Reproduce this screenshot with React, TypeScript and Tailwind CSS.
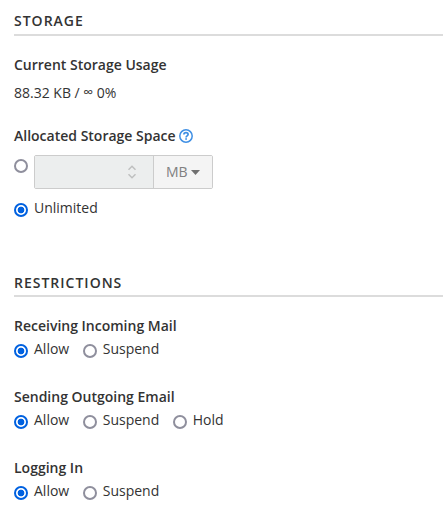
import { useState } from "react";

interface RadioProps {
  name: string;
  value: string;
  checked: boolean;
  onChange: () => void;
}

function Radio({ name, value, checked, onChange }: RadioProps) {
  return (
    <input
      type="radio"
      name={name}
      aria-label={value}
      checked={checked}
      onChange={onChange}
      className="m-0 size-3.5 shrink-0 appearance-none rounded-full border-2 border-[#8f8f9d] bg-white checked:border-[#0061e0] checked:bg-[radial-gradient(circle,#0061e0_3px,#ffffff_3.7px)]"
    />
  );
}

function SectionTitle({ children }: { children: string }) {
  return (
    <h2 className="text-[14px] leading-5 font-semibold tracking-[1px] uppercase">
      {children}
    </h2>
  );
}

interface Restriction {
  id: string;
  label: string;
  options: string[];
}

const restrictions: Restriction[] = [
  { id: "incoming", label: "Receiving Incoming Mail", options: ["Allow", "Suspend"] },
  { id: "outgoing", label: "Sending Outgoing Email", options: ["Allow", "Suspend", "Hold"] },
  { id: "login", label: "Logging In", options: ["Allow", "Suspend"] },
];

function RestrictionField({ id, label, options }: Restriction) {
  const [value, setValue] = useState("Allow");

  return (
    <div>
      <h3 className="font-semibold">{label}</h3>
      <div className="mt-[3px] flex gap-[13.5px]">
        {options.map((option) => (
          <label key={option} className="flex gap-1.5">
            <span className="flex pt-[5px]">
              <Radio
                name={id}
                value={option}
                checked={value === option}
                onChange={() => setValue(option)}
              />
            </span>
            {option}
          </label>
        ))}
      </div>
    </div>
  );
}

export default function App() {
  const [quota, setQuota] = useState("unlimited");

  return (
    <div className="h-[530px] overflow-hidden bg-white pt-[11px] pl-3.5 font-['Open_Sans',sans-serif] text-[14px] leading-5 text-[#333333]">
      {/* Storage */}
      <div className="border-b-2 border-[#dcdcdc] pb-[3px]">
        <SectionTitle>Storage</SectionTitle>
      </div>
      <div className="mt-[19px]">
        <h3 className="font-semibold">Current Storage Usage</h3>
        <p className="mt-2">
          88.32 KB / <span className="relative -top-px">∞</span> 0%
        </p>
      </div>

      <div className="mt-[23px]">
        <h3 className="flex items-center gap-[3px] font-semibold">
          Allocated Storage Space
          <svg width="14" height="14" viewBox="0 0 14 14" fill="none" stroke="#3f8fe4">
            <circle cx="7" cy="7" r="6.2" strokeWidth="1.5" />
            <path d="M4.9 5.6c0-1.3.9-2 2.1-2s2.1.7 2.1 1.8c0 1.5-2 1.4-2 3" strokeWidth="1.7" />
            <path d="M7.1 9.2v1.6" strokeWidth="1.8" />
          </svg>
        </h3>
        <div className="mt-[9px] flex gap-1.5">
          <span className="flex pt-1">
            <Radio
              name="quota"
              value="Custom"
              checked={quota === "custom"}
              onChange={() => setQuota("custom")}
            />
          </span>
          <div className="flex h-[34px] w-[179px] overflow-hidden rounded-[2px] border border-[#cccccc]">
            <div className="flex flex-1 items-center justify-end bg-[#eceeee] pr-4">
              <svg width="10" height="14" viewBox="0 0 10 14" fill="none" stroke="#bfc0c0" strokeWidth="1.5">
                <path d="M1.5 4.8 5 1.3l3.5 3.5M1.5 9.2 5 12.7l3.5-3.5" />
              </svg>
            </div>
            <button
              disabled
              className="flex w-[59px] items-center gap-[3px] border-l border-[#cccccc] bg-[#f4f4f4] pl-3 text-[#808080]"
            >
              MB
              <svg width="9" height="5" viewBox="0 0 9 5" fill="#707070">
                <path d="M0 0h9L4.5 5z" />
              </svg>
            </button>
          </div>
        </div>
        <label className="mt-[9px] flex gap-1.5">
          <span className="flex pt-[5px]">
            <Radio
              name="quota"
              value="Unlimited"
              checked={quota === "unlimited"}
              onChange={() => setQuota("unlimited")}
            />
          </span>
          Unlimited
        </label>
      </div>

      {/* Restrictions */}
      <div className="mt-[55px]">
        <div className="border-b-2 border-[#dcdcdc] pb-0.5">
          <SectionTitle>Restrictions</SectionTitle>
        </div>
        <div className="mt-[19px] flex flex-col gap-7">
          {restrictions.map((item) => (
            <RestrictionField key={item.id} {...item} />
          ))}
        </div>
      </div>
    </div>
  );
}
